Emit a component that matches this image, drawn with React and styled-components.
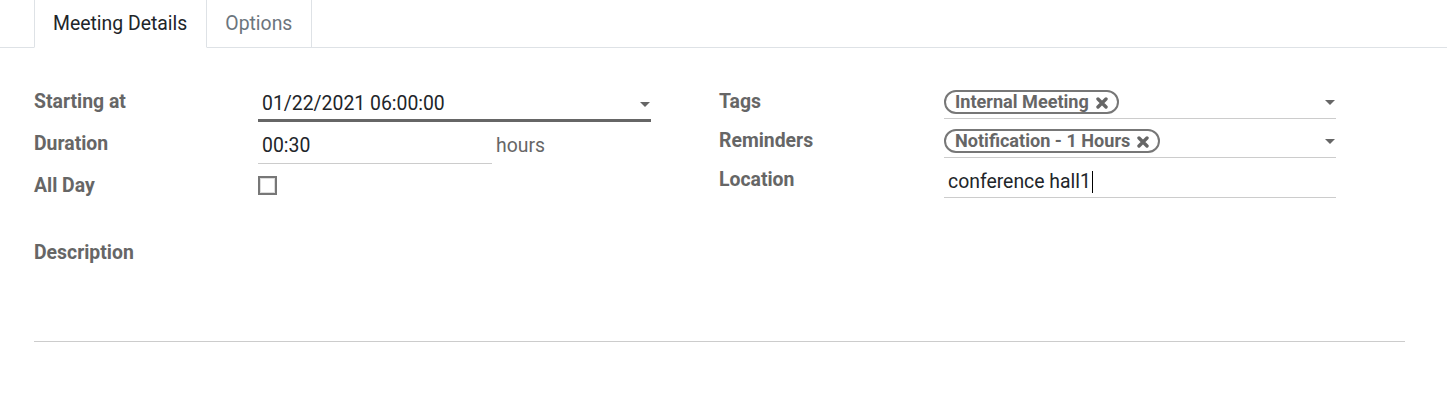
import React from 'react'
import styled, { createGlobalStyle } from 'styled-components'

const GlobalStyle = createGlobalStyle`
  html, body {
    margin: 0;
    padding: 0;
    background: #fff;
    font-family: Roboto, "Liberation Sans", Arial, sans-serif;
    font-size: 19.4px;
    color: #212529;
  }
`

const Page = styled.div`
  width: 1447px;
  height: 404px;
  overflow: hidden;
`

const TabBar = styled.div`
  display: flex;
  height: 47px;
  padding-left: 34px;
  border-bottom: 1px solid #dee2e6;
`

const Tab = styled.div`
  display: flex;
  align-items: center;
  padding: 1px 19px 0 18px;
  margin-bottom: -1px;
  background: #fff;
  color: ${({ active }) => active ? '#212529' : '#6c757d'};
  border-left: ${({ first }) => first ? '1px solid #dee2e6' : 'none'};
  border-right: 1px solid #dee2e6;
  border-bottom: 1px solid ${({ active }) => active ? '#fff' : '#dee2e6'};
  line-height: 1;
`

const Sheet = styled.div`
  padding: 40px 42px 0 34px;
`

const Groups = styled.div`
  display: grid;
  grid-template-columns: 685px 685px;
`

const Group = styled.div`
  display: flex;
  flex-direction: column;
  gap: 8px;
  width: 617px;
`

const Row = styled.div`
  display: grid;
  grid-template-columns: ${({ wide }) => wide ? '225px' : '224px'} 1fr;
  align-items: start;
`

const Label = styled.div`
  padding-top: 1px;
  font-weight: 700;
  color: #666;
  line-height: 26px;
`

const Field = styled.div`
  display: flex;
  align-items: center;
  gap: 6px;
  box-sizing: border-box;
  width: ${({ width }) => width || '100%'};
  padding: ${({ pt }) => pt || 3}px 0 ${({ pb }) => pb || 2}px 4px;
  border-bottom: ${({ thick }) => thick ? '3px solid #666' : '1px solid #ccc'};
  line-height: 26px;
  color: #212529;
`

const Value = styled.span`
  flex: 1;
  display: flex;
  align-items: center;
  white-space: nowrap;
`

const FieldLine = styled.div`
  display: flex;
  align-items: flex-start;
  gap: 4px;
`

const Unit = styled.span`
  color: #666;
  line-height: 26px;
  padding-top: 3px;
`

const Caret = styled.span`
  width: 0;
  height: 0;
  margin-right: 1px;
  border-left: 5.5px solid transparent;
  border-right: 5.5px solid transparent;
  border-top: 5.5px solid #666;
`

const Checkbox = styled.span`
  display: block;
  box-sizing: border-box;
  width: 19px;
  height: 19px;
  margin-top: 3.5px;
  border: 2px solid #777;
  background: #fff;
  box-shadow: inset 0 0 0 1px #ddd;
`

const Pill = styled.span`
  display: inline-flex;
  align-items: center;
  gap: 7px;
  box-sizing: border-box;
  height: 24px;
  margin-left: -4px;
  padding: 1px 9px 0 9px;
  border: 2.5px solid #777;
  border-radius: 12px;
  font-size: 18.1px;
  font-weight: 700;
  color: #666;
  line-height: 1;
`

const TextCursor = styled.span`
  display: inline-block;
  width: 1px;
  height: 22px;
  margin-left: 1px;
  background: #000;
`

const Description = styled.div`
  margin-top: 40px;
  width: 1371px;
`

const Editor = styled.div`
  height: 75px;
  border-bottom: 1px solid #ccc;
`

const Remove = () => (
  <svg width="12" height="12" viewBox="0 0 12 12">
    <path d="M2 2 L10 10 M10 2 L2 10" stroke="#666" strokeWidth="3.4" strokeLinecap="round"/>
  </svg>
)

const App = () => (
  <Page>
    <GlobalStyle/>
    <TabBar>
      <Tab active first>Meeting Details</Tab>
      <Tab>Options</Tab>
    </TabBar>
    <Sheet>
      <Groups>
        <Group>
          <Row>
            <Label>Starting at</Label>
            <Field thick pt={3} pb={2}>
              <Value>01/22/2021 06:00:00</Value>
              <Caret/>
            </Field>
          </Row>
          <Row>
            <Label>Duration</Label>
            <FieldLine>
              <Field width="234px" pt={3} pb={4}>
                <Value>00:30</Value>
              </Field>
              <Unit>hours</Unit>
            </FieldLine>
          </Row>
          <Row>
            <Label>All Day</Label>
            <Checkbox/>
          </Row>
        </Group>
        <Group>
          <Row wide>
            <Label>Tags</Label>
            <Field pt={2} pb={4}>
              <Value>
                <Pill>Internal Meeting <Remove/></Pill>
              </Value>
              <Caret/>
            </Field>
          </Row>
          <Row wide>
            <Label>Reminders</Label>
            <Field pt={2} pb={4}>
              <Value>
                <Pill>Notification - 1 Hours <Remove/></Pill>
              </Value>
              <Caret/>
            </Field>
          </Row>
          <Row wide>
            <Label>Location</Label>
            <Field pt={3} pb={2}>
              <Value>conference hall1<TextCursor/></Value>
            </Field>
          </Row>
        </Group>
      </Groups>
      <Description>
        <Label>Description</Label>
        <Editor/>
      </Description>
    </Sheet>
  </Page>
)

export default App
